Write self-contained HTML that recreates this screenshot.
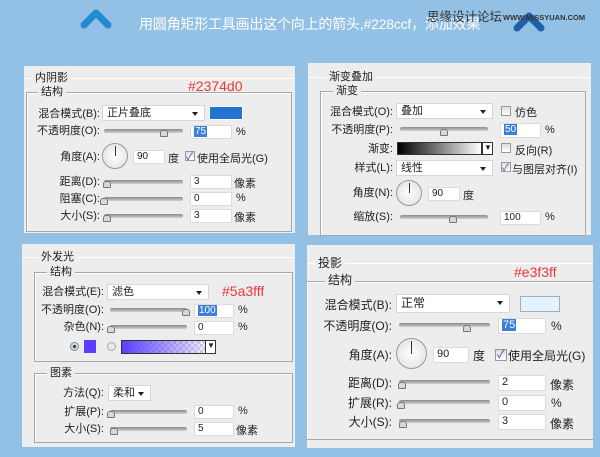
<!DOCTYPE html>
<html><head><meta charset="utf-8"><style>
*{margin:0;padding:0;box-sizing:border-box}
body{width:600px;height:457px;background:#93c1e6;position:relative;overflow:hidden;font-family:"Liberation Sans","Noto Sans CJK SC",sans-serif;font-size:11px;color:#222}
div,span{position:absolute}
.p{background:#ededed}
.ln{height:1px;background:#a8a8a8;border-bottom:1px solid #fff}
.bx{border:1px solid #a8a8a8;box-shadow:inset 1px 1px 0 #fff}
.lg{background:#ededed;padding:0 3px;line-height:14px}
.lb{text-align:right;line-height:14px;white-space:nowrap}
.dd{background:#fff;border:1px solid #d6d6d6;line-height:14px;padding-left:4px}
.dd:after{content:"";position:absolute;right:6px;top:6px;border:3px solid transparent;border-top:4px solid #222}
.in{background:#fff;border:1px solid #dcdcdc;line-height:12px;padding-left:3px;font-size:10px}
.sl{height:4px;background:linear-gradient(#8a8a8a,#d0d0d0);border-radius:2px}
.th{width:8px;height:7px;background:#d8d8d8;border:1px solid #777;border-radius:3px 3px 1px 1px}
.cb{width:10px;height:10px;border:1px solid #999;background:linear-gradient(#ddd,#fff)}
.dial{border-radius:50%;border:1px solid #999;background:radial-gradient(#fff,#ddd)}
.red{color:#e8393a;font-size:14px}
.hl{background:#3a7fd9;color:#fff;padding:0 1px}
</style></head><body>
<svg style="position:absolute;left:80px;top:9px" width="32" height="20"><path d="M4 16 L16 4 L28 16" fill="none" stroke="#238bd0" stroke-width="7" stroke-linecap="round" stroke-linejoin="round"/></svg>
<span style="left:139px;top:14px;color:#fff;font-size:14px;white-space:nowrap;letter-spacing:-0.2px">用圆角矩形工具画出这个向上的箭头,#228ccf，添加效果</span>
<svg style="position:absolute;left:513px;top:12px" width="32" height="20"><path d="M4 16 L16 4 L28 16" fill="none" stroke="#2060a8" stroke-width="7" stroke-linecap="round" stroke-linejoin="round"/></svg>
<span style="left:427px;top:6px;color:#333;font-size:12.5px">思缘设计论坛</span>
<span style="left:503px;top:13px;color:#333;font-size:7.5px;font-weight:bold">WWW.MISSYUAN.COM</span>

<!-- panel1 -->
<div class="p" style="left:24px;top:66px;width:271px;height:167px"></div>
<div class="ln" style="left:24px;top:78px;width:271px"></div>
<span class="lg" style="left:32px;top:71px">内阴影</span>
<div class="bx" style="left:26px;top:92px;width:266px;height:140px"></div>
<span class="lg" style="left:38px;top:85px">结构</span>
<span class="red" style="left:188px;top:78px">#2374d0</span>
<span class="lb" style="left:30px;width:70px;top:107px">混合模式(B):</span>
<div class="dd" style="left:102px;top:105px;width:103px;height:16px">正片叠底</div>
<div style="left:209px;top:106px;width:34px;height:14px;background:#2374d0;border:1px solid #fff"></div>
<span class="lb" style="left:30px;width:70px;top:124px">不透明度(O):</span>
<div class="sl" style="left:104px;top:129px;width:79px"></div><div class="th" style="left:160px;top:130px"></div>
<div class="in" style="left:190px;top:125px;width:42px;height:14px"><span class="hl" style="position:static">75</span></div><span style="left:236px;top:126px">%</span>
<span class="lb" style="left:30px;width:70px;top:150px">角度(A):</span>
<div class="dial" style="left:102px;top:143px;width:26px;height:26px"></div><div style="left:115px;top:146px;width:1px;height:10px;background:#333"></div>
<div class="in" style="left:133px;top:150px;width:32px;height:14px">90</div><span style="left:168px;top:150px">度</span>
<div class="cb" style="left:185px;top:151px"></div><span style="left:186px;top:148px;color:#2a4a9a;font-size:10px">✓</span><span style="left:197px;top:150px">使用全局光(G)</span>
<span class="lb" style="left:30px;width:70px;top:175px">距离(D):</span>
<div class="sl" style="left:104px;top:180px;width:79px"></div><div class="th" style="left:103px;top:181px"></div>
<div class="in" style="left:190px;top:175px;width:42px;height:14px">3</div><span style="left:234px;top:175px">像素</span>
<span class="lb" style="left:30px;width:70px;top:192px">阻塞(C):</span>
<div class="sl" style="left:104px;top:197px;width:79px"></div><div class="th" style="left:100px;top:198px"></div>
<div class="in" style="left:190px;top:192px;width:42px;height:14px">0</div><span style="left:236px;top:192px">%</span>
<span class="lb" style="left:30px;width:70px;top:209px">大小(S):</span>
<div class="sl" style="left:104px;top:214px;width:79px"></div><div class="th" style="left:103px;top:215px"></div>
<div class="in" style="left:190px;top:209px;width:42px;height:14px">3</div><span style="left:234px;top:209px">像素</span>

<!-- panel2 -->
<div class="p" style="left:308px;top:63px;width:283px;height:172px"></div>
<div class="ln" style="left:308px;top:77px;width:283px"></div>
<span class="lg" style="left:326px;top:70px">渐变叠加</span>
<div class="bx" style="left:320px;top:91px;width:266px;height:145px"></div>
<span class="lg" style="left:333px;top:84px">渐变</span>
<span class="lb" style="left:320px;width:73px;top:105px">混合模式(O):</span>
<div class="dd" style="left:396px;top:103px;width:97px;height:16px">叠加</div>
<div class="cb" style="left:501px;top:106px"></div><span style="left:515px;top:104px">仿色</span>
<span class="lb" style="left:320px;width:73px;top:123px">不透明度(P):</span>
<div class="sl" style="left:400px;top:127px;width:88px"></div><div class="th" style="left:440px;top:129px"></div>
<div class="in" style="left:500px;top:123px;width:41px;height:15px"><span class="hl" style="position:static">50</span></div><span style="left:545px;top:124px">%</span>
<span class="lb" style="left:320px;width:73px;top:142px">渐变:</span>
<div style="left:397px;top:142px;width:85px;height:13px;border:1px solid #333;background:linear-gradient(90deg,#000,#fff)"></div>
<div style="left:482px;top:142px;width:11px;height:13px;border:1px solid #333;background:#fff"></div><span style="left:484px;top:143px;font-size:8px">▼</span>
<div class="cb" style="left:501px;top:143px"></div><span style="left:515px;top:142px">反向(R)</span>
<span class="lb" style="left:320px;width:73px;top:161px">样式(L):</span>
<div class="dd" style="left:396px;top:160px;width:97px;height:16px">线性</div>
<div class="cb" style="left:501px;top:162px"></div><span style="left:502px;top:159px;color:#2a4a9a;font-size:10px">✓</span><span style="left:512px;top:161px">与图层对齐(I)</span>
<span class="lb" style="left:320px;width:73px;top:186px">角度(N):</span>
<div class="dial" style="left:396px;top:180px;width:26px;height:26px"></div><div style="left:409px;top:183px;width:1px;height:10px;background:#333"></div>
<div class="in" style="left:428px;top:187px;width:32px;height:14px">90</div><span style="left:463px;top:187px">度</span>
<span class="lb" style="left:320px;width:73px;top:210px">缩放(S):</span>
<div class="sl" style="left:400px;top:215px;width:88px"></div><div class="th" style="left:449px;top:216px"></div>
<div class="in" style="left:500px;top:211px;width:41px;height:14px">100</div><span style="left:545px;top:211px">%</span>

<!-- panel3 -->
<div class="p" style="left:22px;top:244px;width:273px;height:203px"></div>
<div class="ln" style="left:22px;top:257px;width:273px"></div>
<span class="lg" style="left:38px;top:250px">外发光</span>
<div class="bx" style="left:34px;top:272px;width:259px;height:90px"></div>
<span class="lg" style="left:47px;top:265px">结构</span>
<span class="lb" style="left:30px;width:74px;top:285px">混合模式(E):</span>
<div class="dd" style="left:107px;top:284px;width:102px;height:16px">滤色</div>
<span class="red" style="left:222px;top:283px">#5a3fff</span>
<span class="lb" style="left:30px;width:74px;top:303px">不透明度(O):</span>
<div class="sl" style="left:110px;top:308px;width:77px"></div><div class="th" style="left:182px;top:309px"></div>
<div class="in" style="left:194px;top:304px;width:40px;height:14px"><span class="hl" style="position:static">100</span></div><span style="left:238px;top:304px">%</span>
<span class="lb" style="left:30px;width:74px;top:320px">杂色(N):</span>
<div class="sl" style="left:110px;top:325px;width:77px"></div><div class="th" style="left:107px;top:326px"></div>
<div class="in" style="left:194px;top:321px;width:40px;height:14px">0</div><span style="left:238px;top:321px">%</span>
<div style="left:70px;top:342px;width:9px;height:9px;border-radius:50%;border:1px solid #888;background:radial-gradient(#2050a0 30%,#ddd 40%)"></div>
<div style="left:84px;top:340px;width:12px;height:13px;background:#5a3fff"></div>
<div style="left:107px;top:342px;width:9px;height:9px;border-radius:50%;border:1px solid #aaa;background:#e8e8e8"></div>
<div style="left:121px;top:340px;width:85px;height:14px;border:1px solid #333;background:linear-gradient(90deg,#5a3fff,rgba(90,63,255,.1)),repeating-conic-gradient(#ddd 0 25%,#fff 0 50%) 0 0/6px 6px"></div>
<div style="left:205px;top:340px;width:11px;height:14px;border:1px solid #333;background:#fff"></div><span style="left:207px;top:341px;font-size:8px">▼</span>
<div class="bx" style="left:34px;top:373px;width:259px;height:70px"></div>
<span class="lg" style="left:47px;top:366px">图素</span>
<span class="lb" style="left:30px;width:74px;top:386px">方法(Q):</span>
<div class="dd" style="left:108px;top:385px;width:43px;height:16px">柔和</div>
<span class="lb" style="left:30px;width:74px;top:405px">扩展(P):</span>
<div class="sl" style="left:110px;top:410px;width:77px"></div><div class="th" style="left:107px;top:411px"></div>
<div class="in" style="left:194px;top:405px;width:40px;height:14px">0</div><span style="left:238px;top:405px">%</span>
<span class="lb" style="left:30px;width:74px;top:422px">大小(S):</span>
<div class="sl" style="left:110px;top:427px;width:77px"></div><div class="th" style="left:110px;top:428px"></div>
<div class="in" style="left:194px;top:422px;width:40px;height:14px">5</div><span style="left:236px;top:422px">像素</span>

<!-- panel4 -->
<div class="p" style="left:307px;top:245px;width:286px;height:203px;font-size:12px"></div>
<div class="ln" style="left:307px;top:263px;width:286px"></div>
<span class="lg" style="left:315px;top:256px;font-size:12px">投影</span>
<div class="bx" style="left:307px;top:281px;width:286px;height:159px;border-left:0;border-right:0"></div>
<span class="lg" style="left:325px;top:273px;font-size:12px">结构</span>
<span class="red" style="left:514px;top:264px">#e3f3ff</span>
<span class="lb" style="left:310px;width:82px;top:298px;font-size:12px">混合模式(B):</span>
<div class="dd" style="left:396px;top:294px;width:114px;height:19px;line-height:17px;font-size:12px">正常</div>
<div style="left:520px;top:296px;width:40px;height:16px;background:#e3f3ff;border:1px solid #aaa"></div>
<span class="lb" style="left:310px;width:82px;top:319px;font-size:12px">不透明度(O):</span>
<div class="sl" style="left:399px;top:323px;width:91px"></div><div class="th" style="left:463px;top:325px"></div>
<div class="in" style="left:498px;top:318px;width:48px;height:16px;font-size:11px"><span class="hl" style="position:static">75</span></div><span style="left:551px;top:319px;font-size:12px">%</span>
<span class="lb" style="left:310px;width:82px;top:348px;font-size:12px">角度(A):</span>
<div class="dial" style="left:396px;top:338px;width:31px;height:31px"></div><div style="left:411px;top:341px;width:1px;height:13px;background:#333"></div>
<div class="in" style="left:433px;top:347px;width:36px;height:16px;font-size:11px">90</div><span style="left:473px;top:347px;font-size:12px">度</span>
<div class="cb" style="left:495px;top:349px;width:12px;height:12px"></div><span style="left:497px;top:346px;color:#2a4a9a;font-size:11px">✓</span><span style="left:508px;top:347px;font-size:12px">使用全局光(G)</span>
<span class="lb" style="left:310px;width:82px;top:376px;font-size:12px">距离(D):</span>
<div class="sl" style="left:399px;top:380px;width:91px"></div><div class="th" style="left:398px;top:382px"></div>
<div class="in" style="left:498px;top:375px;width:48px;height:16px;font-size:11px">2</div><span style="left:550px;top:376px;font-size:12px">像素</span>
<span class="lb" style="left:310px;width:82px;top:396px;font-size:12px">扩展(R):</span>
<div class="sl" style="left:399px;top:400px;width:91px"></div><div class="th" style="left:397px;top:402px"></div>
<div class="in" style="left:498px;top:395px;width:48px;height:16px;font-size:11px">0</div><span style="left:551px;top:396px;font-size:12px">%</span>
<span class="lb" style="left:310px;width:82px;top:415px;font-size:12px">大小(S):</span>
<div class="sl" style="left:399px;top:419px;width:91px"></div><div class="th" style="left:399px;top:421px"></div>
<div class="in" style="left:498px;top:414px;width:48px;height:16px;font-size:11px">3</div><span style="left:550px;top:415px;font-size:12px">像素</span>
</body></html>
